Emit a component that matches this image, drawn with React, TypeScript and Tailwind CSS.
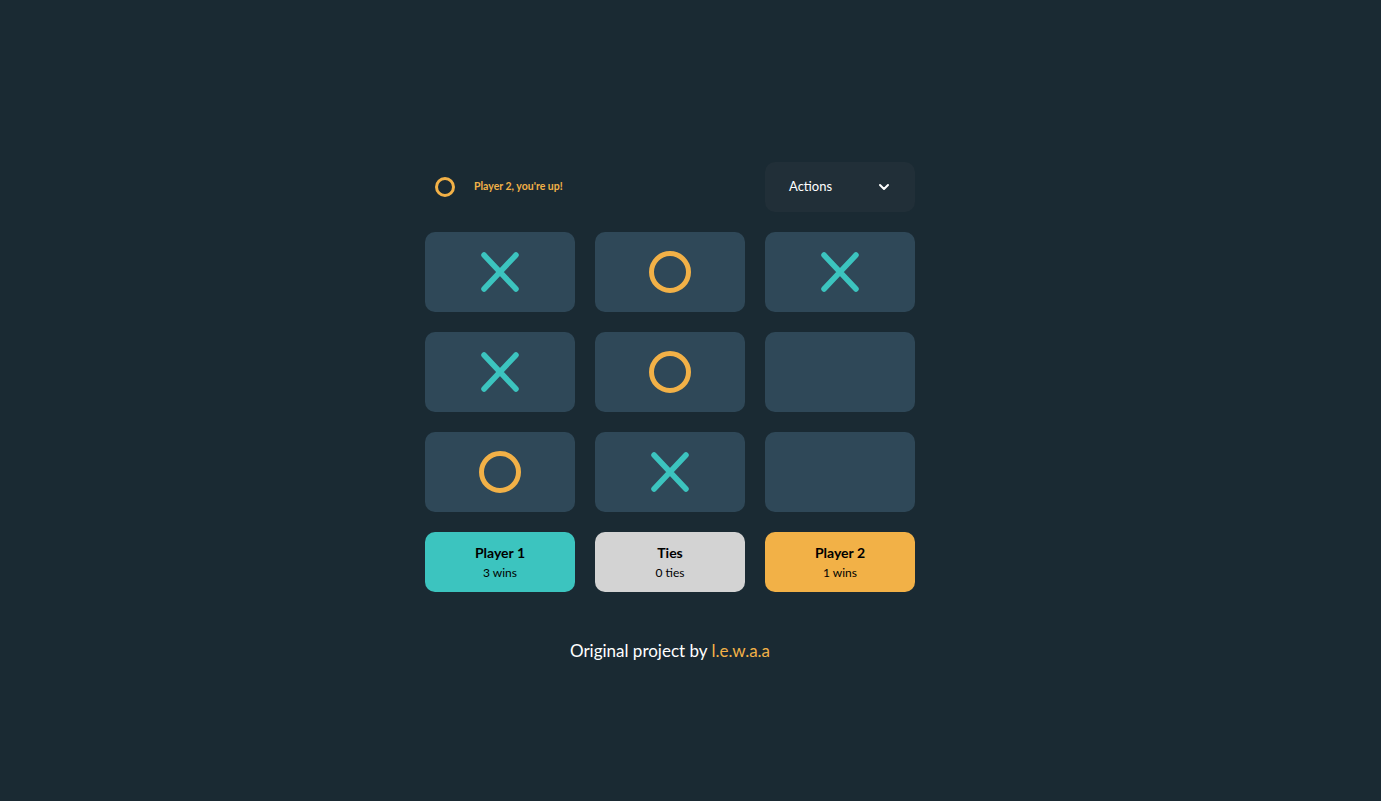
import { ChevronDown } from "lucide-react";

type Mark = "X" | "O" | null;

const board: Mark[] = ["X", "O", "X", "X", "O", null, "O", "X", null];

const scores = [
  { label: "Player 1", value: "3 wins", bg: "bg-[#3cc4bf]" },
  { label: "Ties", value: "0 ties", bg: "bg-[#d3d3d3]" },
  { label: "Player 2", value: "1 wins", bg: "bg-[#f2b147]" },
];

function XMark() {
  return (
    <svg width={42} height={42} viewBox="0 0 42 42" fill="none">
      <path
        d="M5 4 L37 38 M37 4 L5 38"
        stroke="#3cc4bf"
        strokeWidth="5.5"
        strokeLinecap="round"
      />
    </svg>
  );
}

function OMark({ size = 42, stroke = 5 }: { size?: number; stroke?: number }) {
  const r = size / 2 - stroke / 2;
  return (
    <svg width={size} height={size} viewBox={`0 0 ${size} ${size}`} fill="none">
      <circle cx={size / 2} cy={size / 2} r={r} stroke="#f2b147" strokeWidth={stroke} />
    </svg>
  );
}

export default function App() {
  return (
    <div
      className="flex min-h-screen flex-col items-center justify-center bg-[#1a2a33] pr-[41px] pt-[22px] text-white"
      style={{ fontFamily: "Lato, sans-serif" }}
    >
      <div className="grid w-[490px] grid-cols-3 gap-5">
        <div className="col-span-2 flex h-[50px] items-center gap-[19px] pl-[10px]">
          <OMark size={20} stroke={3} />
          <span className="text-[10.5px] font-bold text-[#f2b147]">Player 2, you're up!</span>
        </div>
        <button className="flex h-[50px] items-center justify-between rounded-[10px] bg-[#212f38] pl-6 pr-[23px] text-[13px] text-white">
          Actions
          <ChevronDown size={16} strokeWidth={3} />
        </button>

        {board.map((m, i) => (
          <div
            key={i}
            className="flex h-20 items-center justify-center rounded-[10px] bg-[#2f4858]"
          >
            {m === "X" && <XMark />}
            {m === "O" && <OMark />}
          </div>
        ))}

        {scores.map((s) => (
          <div
            key={s.label}
            className={`flex h-[60px] flex-col items-center justify-center gap-[2px] rounded-[10px] ${s.bg} text-black`}
          >
            <span className="text-[14px] font-bold leading-5">{s.label}</span>
            <span className="text-[12px] leading-4">{s.value}</span>
          </div>
        ))}
      </div>
      <p className="mt-[49px] text-[17px] leading-5">
        Original project by <span className="text-[#f2b147]">l.e.w.a.a</span>
      </p>
    </div>
  );
}
